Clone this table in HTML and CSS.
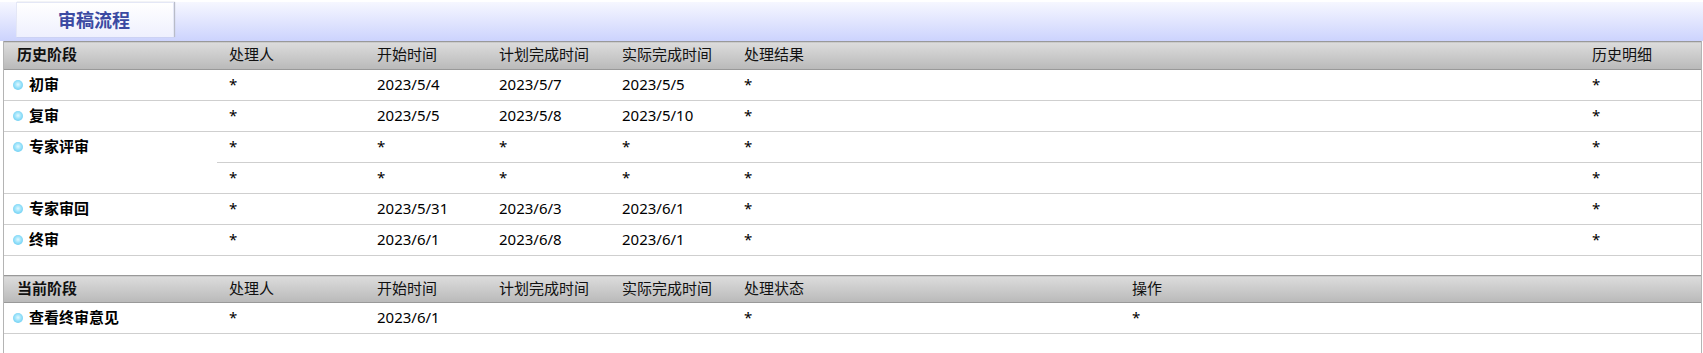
FILE: index.html
```html
<!DOCTYPE html>
<html lang="zh-CN">
<head>
    <meta charset="UTF-8">
    <meta name="viewport" content="width=device-width, initial-scale=1.0">
    <title>审稿流程</title>
    <link rel="stylesheet" href="styles.css">
</head>
<body>
    <div class="tabbar">
        <div class="tab">审稿流程</div>
    </div>
    <div class="panel">
        <table class="flow">
            <colgroup>
                <col class="c-stage">
                <col class="c-user">
                <col class="c-date">
                <col class="c-date2">
                <col class="c-date">
                <col class="c-result">
                <col>
            </colgroup>
            <thead>
                <tr>
                    <th class="stage">历史阶段</th>
                    <th>处理人</th>
                    <th>开始时间</th>
                    <th>计划完成时间</th>
                    <th>实际完成时间</th>
                    <th>处理结果</th>
                    <th>历史明细</th>
                </tr>
            </thead>
            <tbody>
                <tr>
                    <td class="stage"><span class="dot"></span>初审</td>
                    <td>*</td><td>2023/5/4</td><td>2023/5/7</td><td>2023/5/5</td><td>*</td><td>*</td>
                </tr>
                <tr>
                    <td class="stage"><span class="dot"></span>复审</td>
                    <td>*</td><td>2023/5/5</td><td>2023/5/8</td><td>2023/5/10</td><td>*</td><td>*</td>
                </tr>
                <tr>
                    <td class="stage top" rowspan="2"><span class="dot"></span>专家评审</td>
                    <td>*</td><td>*</td><td>*</td><td>*</td><td>*</td><td>*</td>
                </tr>
                <tr>
                    <td>*</td><td>*</td><td>*</td><td>*</td><td>*</td><td>*</td>
                </tr>
                <tr>
                    <td class="stage"><span class="dot"></span>专家审回</td>
                    <td>*</td><td>2023/5/31</td><td>2023/6/3</td><td>2023/6/1</td><td>*</td><td>*</td>
                </tr>
                <tr>
                    <td class="stage"><span class="dot"></span>终审</td>
                    <td>*</td><td>2023/6/1</td><td>2023/6/8</td><td>2023/6/1</td><td>*</td><td>*</td>
                </tr>
            </tbody>
        </table>

        <table class="flow current">
            <colgroup>
                <col class="c-stage">
                <col class="c-user">
                <col class="c-date">
                <col class="c-date2">
                <col class="c-date">
                <col class="c-state">
                <col>
            </colgroup>
            <thead>
                <tr>
                    <th class="stage">当前阶段</th>
                    <th>处理人</th>
                    <th>开始时间</th>
                    <th>计划完成时间</th>
                    <th>实际完成时间</th>
                    <th>处理状态</th>
                    <th>操作</th>
                </tr>
            </thead>
            <tbody>
                <tr>
                    <td class="stage"><span class="dot"></span>查看终审意见</td>
                    <td>*</td><td>2023/6/1</td><td></td><td></td><td>*</td><td>*</td>
                </tr>
            </tbody>
        </table>
    </div>
</body>
</html>
```

FILE: styles.css
```css
html {
    font-family: "Noto Sans", "Noto Sans CJK SC", sans-serif;
    font-size: 15px;
    color: #000;
}
body {
    margin: 0;
    background: #fff;
}

/* top strip with the single tab */
.tabbar {
    height: 39px;
    padding-left: 16px;
    box-sizing: border-box;
    background: linear-gradient(#f6f7ff, #ccd3fd);
}
.tab {
    width: 158px;
    height: 35px;
    margin-top: 2px;
    box-sizing: border-box;
    padding-left: 41px;
    line-height: 35px;
    font-size: 18px;
    font-weight: bold;
    color: #3b4aa2;
    background: linear-gradient(#ffffff, #eef0fe);
    border: 1px solid #e4e7f6;
    border-bottom: none;
    box-shadow: 1px 0 1px #b9bcc8;
}

.panel {
    margin-left: 3px;
    width: 1699px;
    min-height: 314px;
    box-sizing: border-box;
    border-left: 1px solid #b4b4b4;
    border-right: 1px solid #b4b4b4;
}

.flow {
    width: 100%;
    table-layout: fixed;
    border-collapse: collapse;
}
.c-stage { width: 213px; }
.c-user { width: 148px; }
.c-date { width: 122px; }
.c-date2 { width: 123px; }
.c-result { width: 848px; }
.c-state { width: 388px; }

.flow th,
.flow td {
    padding: 0 0 3px 12px;
    line-height: 20px;
    text-align: left;
    white-space: nowrap;
    vertical-align: middle;
}
.flow th {
    height: 24px;
    font-weight: normal;
    color: #111;
    background: linear-gradient(#dcdcdc, #b9b9b9);
    border-top: 1px solid #999;
    border-bottom: 1px solid #999;
}
.flow th.stage {
    padding-left: 13px;
    font-weight: bold;
}
.flow td {
    height: 27px;
    border-bottom: 1px solid #cfcfcf;
}
.flow td.stage {
    padding-left: 9px;
    font-weight: bold;
}
.flow td.top {
    vertical-align: top;
    padding-top: 4px;
}

.current {
    margin-top: 19px;
}
.current th {
    height: 23px;
}

.dot {
    display: inline-block;
    width: 10px;
    height: 10px;
    margin-right: 6px;
    border-radius: 50%;
    vertical-align: 0;
    background: radial-gradient(circle at 50% 45%, #e4f9ff 0, #9fe4fb 40%, #4fc2ee 100%);
}
```
